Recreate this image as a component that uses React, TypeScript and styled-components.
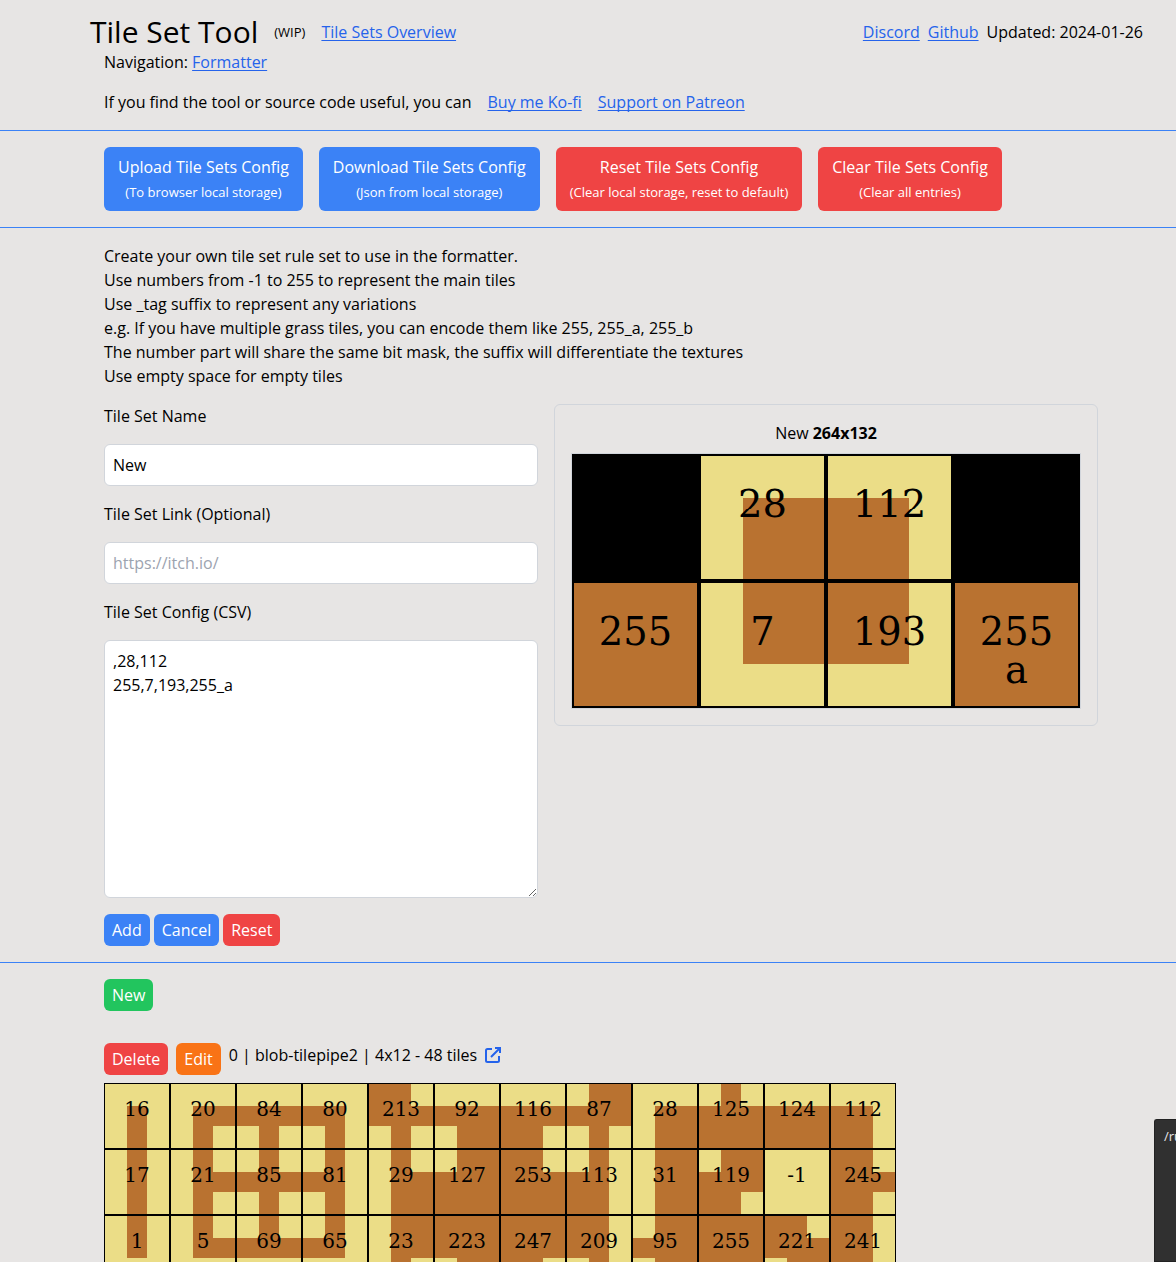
import React from "react";
import styled, { createGlobalStyle, css } from "styled-components";

const GlobalStyle = createGlobalStyle`
  *, *::before, *::after { box-sizing: border-box; }
  body {
    margin: 0;
    background: #e7e5e4;
    color: #000;
    font-family: "Open Sans", "Noto Sans", sans-serif;
    font-size: 16px;
    line-height: 24px;
  }
  h1, p { margin: 0; font-weight: 400; }
`;

const tones = {
  blue: "#3b82f6",
  red: "#ef4444",
  green: "#22c55e",
  orange: "#f97316",
};
type Tone = keyof typeof tones;

const Header = styled.header`
  padding: 14px 33px 16px 104px;
  border-bottom: 1px solid ${tones.blue};
`;

const TitleBar = styled.div`
  display: flex;
  align-items: center;
  gap: 16px;
  height: 36px;
  margin-left: -14px;
`;

const Title = styled.h1`
  font-size: 30px;
  line-height: 36px;
`;

const Small = styled.small`
  font-size: 13px;
  line-height: 16px;
`;

const HeaderLinks = styled.div`
  display: flex;
  gap: 8px;
  margin-left: auto;
`;

const Link = styled.a`
  color: #2563eb;
  text-decoration: underline;
  text-decoration-skip-ink: none;
  text-underline-offset: 2px;
`;

const Support = styled.p`
  display: flex;
  gap: 16px;
  margin-top: 16px;
`;

const Section = styled.section<{ $ruled?: boolean }>`
  padding: 16px 78px 16px 104px;
  ${({ $ruled }) => $ruled && css`border-bottom: 1px solid ${tones.blue};`}
`;

const Row = styled.div<{ $gap: number }>`
  display: flex;
  align-items: flex-start;
  gap: ${({ $gap }) => $gap}px;
`;

const Button = styled.button<{ $tone: Tone; $large?: boolean }>`
  display: flex;
  flex-direction: column;
  align-items: center;
  padding: ${({ $large }) => ($large ? "8px 14px" : "4px 8px")};
  border: 0;
  border-radius: 6px;
  background: ${({ $tone }) => tones[$tone]};
  color: #fff;
  font: inherit;
  cursor: pointer;
`;

const Editor = styled.div`
  display: grid;
  grid-template-columns: minmax(0, 434fr) minmax(0, 544fr);
  align-items: start;
  gap: 16px;
  margin-top: 16px;
`;

const Form = styled.form`
  display: flex;
  flex-direction: column;
  gap: 16px;
`;

const field = css`
  display: block;
  width: 100%;
  padding: 8px;
  border: 1px solid #d1d5db;
  border-radius: 6px;
  background: #fff;
  color: #000;
  font: inherit;
  &::placeholder { color: #9ca3af; }
`;

const Input = styled.input`
  ${field}
  height: 42px;
`;

const TextArea = styled.textarea`
  ${field}
  resize: vertical;
`;

const Preview = styled.figure`
  margin: 0;
  padding: 16px;
  border: 1px solid #d1d5db;
  border-radius: 6px;
`;

const Caption = styled.figcaption`
  margin-bottom: 8px;
  text-align: center;
`;

const PreviewFrame = styled.div`
  border: 1px solid #d1d5db;
`;

const TileSvg = styled.svg<{ $natural?: number }>`
  display: block;
  width: 100%;
  ${({ $natural }) => $natural && css`max-width: ${$natural}px;`}
  font-family: "DejaVu Serif", serif;
  font-size: 20px;
  text-anchor: middle;
`;

const TileSet = styled.article`
  display: flex;
  flex-direction: column;
  gap: 8px;
  margin-top: 32px;
`;

const IconLink = styled.a`
  display: flex;
  align-items: center;
  height: 24px;
  color: #2563eb;
`;

const PathTip = styled.div`
  position: fixed;
  right: 0;
  bottom: 0;
  width: 22px;
  height: 143px;
  padding: 4px 0 0 9px;
  overflow: hidden;
  border: 1px solid #222;
  border-right: 0;
  border-radius: 3px 0 0 0;
  background: #303030;
  color: #e8e8e8;
  font-size: 13px;
  white-space: nowrap;
`;

const TILE = 66;
const EDGES = [1, 23, 43, 65];
// Neighbour bits, reading the 3x3 cell left to right and top to bottom; null is the centre.
const BITS = [128, 1, 2, 64, null, 4, 32, 16, 8];

function Tile({ code }: { code: string }) {
  const [num, tag] = code.split("_");
  const mask = Number(num);
  return (
    <>
      <g shapeRendering="crispEdges">
        <rect x={1} y={1} width={64} height={64} fill="#ebdd87" />
        {mask >= 0 &&
          BITS.map((bit, i) => {
            if (bit !== null && !(mask & bit)) return null;
            const c = i % 3;
            const r = Math.floor(i / 3);
            return (
              <rect
                key={i}
                x={EDGES[c]}
                y={EDGES[r]}
                width={EDGES[c + 1] - EDGES[c]}
                height={EDGES[r + 1] - EDGES[r]}
                fill="#b97230"
              />
            );
          })}
      </g>
      <text x={33} y={33}>{num}</text>
      {tag && <text x={33} y={53}>{tag}</text>}
    </>
  );
}

function TileSheet({ csv, natural, label }: { csv: string; natural?: boolean; label: string }) {
  const rows = csv.split("\n").map((line) => line.split(","));
  const cols = Math.max(...rows.map((r) => r.length));
  const width = cols * TILE;
  const height = rows.length * TILE;
  return (
    <TileSvg viewBox={`0 0 ${width} ${height}`} $natural={natural ? width : undefined} role="img" aria-label={label}>
      <rect width={width} height={height} />
      {rows.map((row, y) =>
        row.map((code, x) =>
          code ? (
            <g key={`${x}-${y}`} transform={`translate(${x * TILE} ${y * TILE})`}>
              <Tile code={code} />
            </g>
          ) : null
        )
      )}
    </TileSvg>
  );
}

const newCsv = ",28,112\n255,7,193,255_a";
const blobCsv = [
  "16,20,84,80,213,92,116,87,28,125,124,112",
  "17,21,85,81,29,127,253,113,31,119,-1,245",
  "1,5,69,65,23,223,247,209,95,255,221,241",
  "0,4,68,64,117,71,197,93,7,199,215,193",
].join("\n");

const actions: { tone: Tone; label: string; note: string }[] = [
  { tone: "blue", label: "Upload Tile Sets Config", note: "(To browser local storage)" },
  { tone: "blue", label: "Download Tile Sets Config", note: "(Json from local storage)" },
  { tone: "red", label: "Reset Tile Sets Config", note: "(Clear local storage, reset to default)" },
  { tone: "red", label: "Clear Tile Sets Config", note: "(Clear all entries)" },
];

export default function App() {
  return (
    <>
      <GlobalStyle />
      <Header>
        <TitleBar>
          <Title>Tile Set Tool</Title>
          <Small>(WIP)</Small>
          <Link href="#overview">Tile Sets Overview</Link>
          <HeaderLinks>
            <Link href="#discord">Discord</Link>
            <Link href="#github">Github</Link>
            <span>Updated: 2024-01-26</span>
          </HeaderLinks>
        </TitleBar>
        <nav>
          Navigation: <Link href="#formatter">Formatter</Link>
        </nav>
        <Support>
          <span>If you find the tool or source code useful, you can</span>
          <Link href="#kofi">Buy me Ko-fi</Link>
          <Link href="#patreon">Support on Patreon</Link>
        </Support>
      </Header>

      <Section $ruled>
        <Row $gap={16}>
          {actions.map((a) => (
            <Button key={a.label} type="button" $tone={a.tone} $large>
              <span>{a.label}</span>
              <span>
                <Small>{a.note}</Small>
              </span>
            </Button>
          ))}
        </Row>
      </Section>

      <Section $ruled>
        <p>Create your own tile set rule set to use in the formatter.</p>
        <p>Use numbers from -1 to 255 to represent the main tiles</p>
        <p>Use _tag suffix to represent any variations</p>
        <p>e.g. If you have multiple grass tiles, you can encode them like 255, 255_a, 255_b</p>
        <p>The number part will share the same bit mask, the suffix will differentiate the textures</p>
        <p>Use empty space for empty tiles</p>
        <Editor>
          <Form onSubmit={(e) => e.preventDefault()}>
            <label htmlFor="name">Tile Set Name</label>
            <Input id="name" defaultValue="New" />
            <label htmlFor="link">Tile Set Link (Optional)</label>
            <Input id="link" placeholder="https://itch.io/" />
            <label htmlFor="config">Tile Set Config (CSV)</label>
            <TextArea id="config" rows={10} defaultValue={newCsv} />
            <Row $gap={4}>
              <Button type="submit" $tone="blue">Add</Button>
              <Button type="button" $tone="blue">Cancel</Button>
              <Button type="reset" $tone="red">Reset</Button>
            </Row>
          </Form>
          <Preview>
            <Caption>
              New <b>264x132</b>
            </Caption>
            <PreviewFrame>
              <TileSheet csv={newCsv} label="New" />
            </PreviewFrame>
          </Preview>
        </Editor>
      </Section>

      <Section>
        <Row $gap={8}>
          <Button type="button" $tone="green">New</Button>
        </Row>
        <TileSet>
          <Row $gap={8}>
            <Button type="button" $tone="red">Delete</Button>
            <Button type="button" $tone="orange">Edit</Button>
            <span>0 | blob-tilepipe2 | 4x12 - 48 tiles</span>
            <IconLink href="#blob-tilepipe2" aria-label="Open tile set link">
              <svg width="16" height="16" viewBox="0 0 16 16" fill="none" stroke="currentColor" strokeWidth="2">
                <path d="M7 2H2.5Q1 2 1 3.500V13.500Q1 15 2.500 15H12.500Q14 15 14 13.500V9M10 1H15V6M15 1L6 10" />
              </svg>
            </IconLink>
          </Row>
          <TileSheet csv={blobCsv} natural label="blob-tilepipe2" />
        </TileSet>
      </Section>

      <PathTip>/ru</PathTip>
    </>
  );
}
